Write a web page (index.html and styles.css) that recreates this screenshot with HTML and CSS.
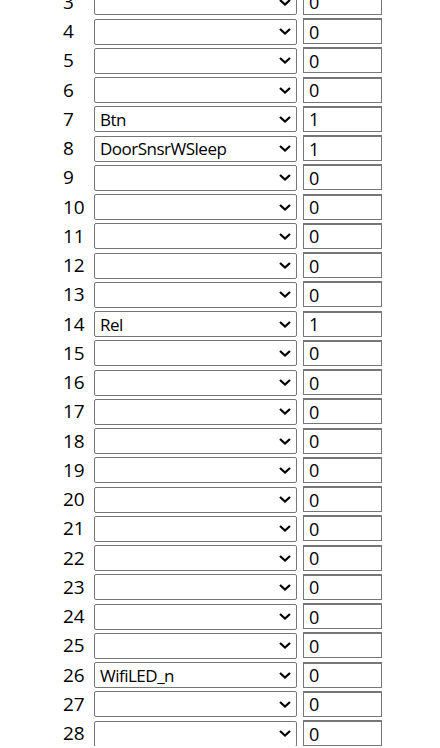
FILE: index.html
```html
<!DOCTYPE html>
<html>
	<head>
		<title>Module pins</title>
		<meta name="viewport" content="width=device-width, initial-scale=1" />
		<link rel="stylesheet" href="styles.css">
	</head>
	<body>
		<main class="pins">
			<div class="pin"><span class="num">3</span><div class="pick"><select><option></option></select><svg class="chev" viewBox="0 0 12 7"><path d="M1 1l5 4.5L11 1"/></svg></div><input type="text" value="0"></div>
			<div class="pin"><span class="num">4</span><div class="pick"><select><option></option></select><svg class="chev" viewBox="0 0 12 7"><path d="M1 1l5 4.5L11 1"/></svg></div><input type="text" value="0"></div>
			<div class="pin"><span class="num">5</span><div class="pick"><select><option></option></select><svg class="chev" viewBox="0 0 12 7"><path d="M1 1l5 4.5L11 1"/></svg></div><input type="text" value="0"></div>
			<div class="pin"><span class="num">6</span><div class="pick"><select><option></option></select><svg class="chev" viewBox="0 0 12 7"><path d="M1 1l5 4.5L11 1"/></svg></div><input type="text" value="0"></div>
			<div class="pin"><span class="num">7</span><div class="pick"><select><option>Btn</option></select><svg class="chev" viewBox="0 0 12 7"><path d="M1 1l5 4.5L11 1"/></svg></div><input type="text" value="1"></div>
			<div class="pin"><span class="num">8</span><div class="pick"><select><option>DoorSnsrWSleep</option></select><svg class="chev" viewBox="0 0 12 7"><path d="M1 1l5 4.5L11 1"/></svg></div><input type="text" value="1"></div>
			<div class="pin"><span class="num">9</span><div class="pick"><select><option></option></select><svg class="chev" viewBox="0 0 12 7"><path d="M1 1l5 4.5L11 1"/></svg></div><input type="text" value="0"></div>
			<div class="pin"><span class="num">10</span><div class="pick"><select><option></option></select><svg class="chev" viewBox="0 0 12 7"><path d="M1 1l5 4.5L11 1"/></svg></div><input type="text" value="0"></div>
			<div class="pin"><span class="num">11</span><div class="pick"><select><option></option></select><svg class="chev" viewBox="0 0 12 7"><path d="M1 1l5 4.5L11 1"/></svg></div><input type="text" value="0"></div>
			<div class="pin"><span class="num">12</span><div class="pick"><select><option></option></select><svg class="chev" viewBox="0 0 12 7"><path d="M1 1l5 4.5L11 1"/></svg></div><input type="text" value="0"></div>
			<div class="pin"><span class="num">13</span><div class="pick"><select><option></option></select><svg class="chev" viewBox="0 0 12 7"><path d="M1 1l5 4.5L11 1"/></svg></div><input type="text" value="0"></div>
			<div class="pin"><span class="num">14</span><div class="pick"><select><option>Rel</option></select><svg class="chev" viewBox="0 0 12 7"><path d="M1 1l5 4.5L11 1"/></svg></div><input type="text" value="1"></div>
			<div class="pin"><span class="num">15</span><div class="pick"><select><option></option></select><svg class="chev" viewBox="0 0 12 7"><path d="M1 1l5 4.5L11 1"/></svg></div><input type="text" value="0"></div>
			<div class="pin"><span class="num">16</span><div class="pick"><select><option></option></select><svg class="chev" viewBox="0 0 12 7"><path d="M1 1l5 4.5L11 1"/></svg></div><input type="text" value="0"></div>
			<div class="pin"><span class="num">17</span><div class="pick"><select><option></option></select><svg class="chev" viewBox="0 0 12 7"><path d="M1 1l5 4.5L11 1"/></svg></div><input type="text" value="0"></div>
			<div class="pin"><span class="num">18</span><div class="pick"><select><option></option></select><svg class="chev" viewBox="0 0 12 7"><path d="M1 1l5 4.5L11 1"/></svg></div><input type="text" value="0"></div>
			<div class="pin"><span class="num">19</span><div class="pick"><select><option></option></select><svg class="chev" viewBox="0 0 12 7"><path d="M1 1l5 4.5L11 1"/></svg></div><input type="text" value="0"></div>
			<div class="pin"><span class="num">20</span><div class="pick"><select><option></option></select><svg class="chev" viewBox="0 0 12 7"><path d="M1 1l5 4.5L11 1"/></svg></div><input type="text" value="0"></div>
			<div class="pin"><span class="num">21</span><div class="pick"><select><option></option></select><svg class="chev" viewBox="0 0 12 7"><path d="M1 1l5 4.5L11 1"/></svg></div><input type="text" value="0"></div>
			<div class="pin"><span class="num">22</span><div class="pick"><select><option></option></select><svg class="chev" viewBox="0 0 12 7"><path d="M1 1l5 4.5L11 1"/></svg></div><input type="text" value="0"></div>
			<div class="pin"><span class="num">23</span><div class="pick"><select><option></option></select><svg class="chev" viewBox="0 0 12 7"><path d="M1 1l5 4.5L11 1"/></svg></div><input type="text" value="0"></div>
			<div class="pin"><span class="num">24</span><div class="pick"><select><option></option></select><svg class="chev" viewBox="0 0 12 7"><path d="M1 1l5 4.5L11 1"/></svg></div><input type="text" value="0"></div>
			<div class="pin"><span class="num">25</span><div class="pick"><select><option></option></select><svg class="chev" viewBox="0 0 12 7"><path d="M1 1l5 4.5L11 1"/></svg></div><input type="text" value="0"></div>
			<div class="pin"><span class="num">26</span><div class="pick"><select><option>WifiLED_n</option></select><svg class="chev" viewBox="0 0 12 7"><path d="M1 1l5 4.5L11 1"/></svg></div><input type="text" value="0"></div>
			<div class="pin"><span class="num">27</span><div class="pick"><select><option></option></select><svg class="chev" viewBox="0 0 12 7"><path d="M1 1l5 4.5L11 1"/></svg></div><input type="text" value="0"></div>
			<div class="pin"><span class="num">28</span><div class="pick"><select><option></option></select><svg class="chev" viewBox="0 0 12 7"><path d="M1 1l5 4.5L11 1"/></svg></div><input type="text" value="0"></div>
		</main>
	</body>
</html>
```

FILE: styles.css
```css
body {
	margin: 0;
	font-family: "Open Sans", sans-serif;
	font-size: 19px;
	color: #000;
	background: #fff;
}
.pins {
	display: flex;
	flex-flow: column;
	gap: 3.25px;
	margin-top: -11.25px;
	padding-left: 63px;
}
.pin {
	display: flex;
	align-items: center;
	height: 26px;
}
.num {
	width: 31px;
	line-height: 26px;
}
.pick {
	position: relative;
	width: 203px;
	height: 26px;
}
.pick select {
	-webkit-appearance: none;
	appearance: none;
	box-sizing: border-box;
	width: 100%;
	height: 26px;
	margin: 0;
	padding: 0 24px 0 5px;
	font-family: "Open Sans", sans-serif;
	font-size: 17px;
	letter-spacing: -0.5px;
	color: #000;
	background: #fff;
	border: 1px solid #767676;
	border-radius: 2px;
}
.chev {
	position: absolute;
	right: 6px;
	top: 10px;
	width: 12px;
	height: 7px;
	fill: none;
	stroke: #000;
	stroke-width: 2.2;
	pointer-events: none;
}
.pin input {
	box-sizing: border-box;
	width: 79px;
	height: 26px;
	margin: 0 0 0 6px;
	padding: 0 5px;
	font-family: "Open Sans", sans-serif;
	font-size: 18px;
	color: #000;
	border: 1px solid #767676;
	border-top-width: 2px;
	border-radius: 0;
}
```
